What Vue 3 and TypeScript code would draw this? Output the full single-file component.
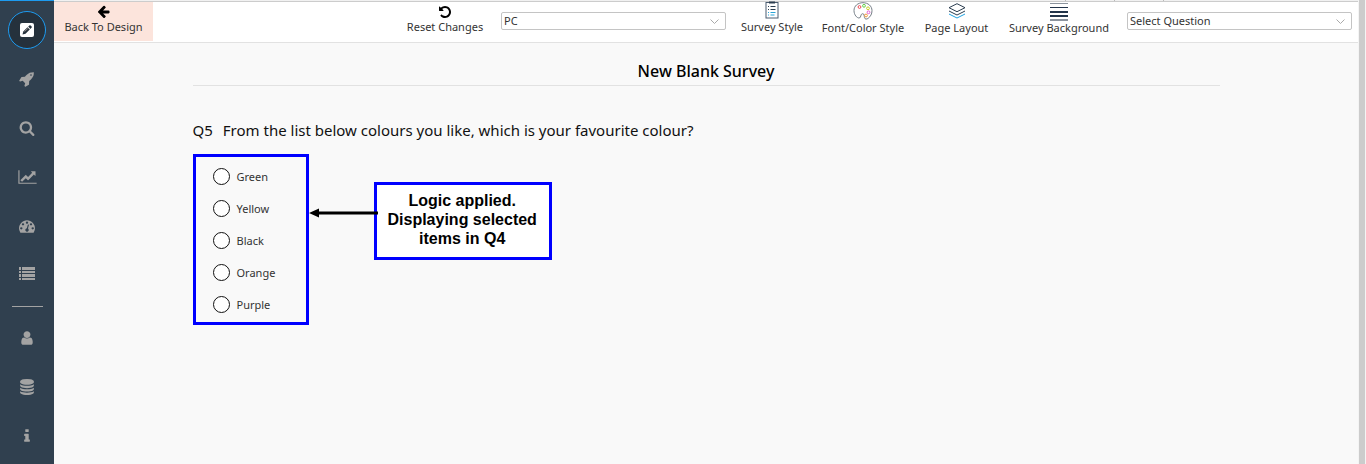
<script setup lang="ts">
import { ref } from 'vue'

interface NavItem {
  name: string
  box: string
  path: string
}

const dot = 'q0-53-37.5-90.5t-90.5-37.5-90.5 37.5-37.5 90.5 37.5 90.5 90.5 37.5 90.5-37.5 37.5-90.5z'
const disc = 'q237 0 443-43t325-127v170q0 69-103 128t-280 93.5-385 34.5-385-34.5-280-93.5-103-128v-170q119 84 325 127t443 43z'

const mainNav: NavItem[] = [
  {
    name: 'Launch',
    box: '0 0 1792 1792',
    path: 'M1440 448q0-40-28-68t-68-28-68 28-28 68 28 68 68 28 68-28 28-68zm224-288q0 249-75.5 430.5t-253.5 360.5q-81 80-195 176l-20 379q-2 16-16 26l-384 224q-7 4-16 4-12 0-23-9l-64-64q-13-14-8-32l85-276-281-281-276 85q-3 1-9 1-14 0-23-9l-64-64q-17-19-5-39l224-384q10-14 26-16l379-20q96-114 176-195 188-187 358-258t431-71q14 0 24 9.5t10 22.5z',
  },
  {
    name: 'Search',
    box: '0 0 1792 1792',
    path: 'M1216 832q0-185-131.5-316.5t-316.5-131.5-316.5 131.5-131.5 316.5 131.5 316.5 316.5 131.5 316.5-131.5 131.5-316.5zm512 832q0 52-38 90t-90 38q-54 0-90-38l-343-342q-179 124-399 124-143 0-273.5-55.5t-225-150-150-225-55.5-273.5 55.5-273.5 150-225 225-150 273.5-55.5 273.5 55.5 225 150 150 225 55.5 273.5q0 220-124 399l343 343q37 37 37 90z',
  },
  {
    name: 'Reports',
    box: '0 0 2048 1792',
    path: 'M2048 1536v128h-2048v-1536h128v1408h1920zm-128-1248v435q0 21-19.5 29.5t-35.5-7.5l-121-121-633 633q-10 10-23 10t-23-10l-233-233-416 416-192-192 585-585q10-10 23-10t23 10l233 233 464-464-121-121q-16-16-7.5-35.5t29.5-19.5h435q14 0 23 9t9 23z',
  },
  {
    name: 'Dashboard',
    box: '0 0 1792 1792',
    path: `M384 1152${dot}m192-448${dot}m428 481l101-382q6-26-7.5-48.5t-38.5-29.5-48 6.5-30 39.5l-101 382q-60 5-107 43.5t-63 98.5q-20 77 20 146t117 89 146-20 89-117q16-60-6-117t-72-91zm660-33${dot}m-640-640${dot}m448 192${dot}m320 448q0 261-141 483-19 29-54 29h-1402q-35 0-54-29-141-221-141-483 0-182 71-348t191-286 286-191 348-71 348 71 286 191 191 286 71 348z`,
  },
  {
    name: 'List',
    box: '0 0 16 16',
    path: 'M0 0h2v3H0zM3 0h13v3H3zM0 4h2v2H0zM3 4h13v2H3zM0 7h2v3H0zM3 7h13v3H3zM0 11h2v2H0zM3 11h13v2H3z',
  },
]

const accountNav: NavItem[] = [
  {
    name: 'Profile',
    box: '0 0 1792 1792',
    path: 'M1536 1399q0 109-62.5 187t-150.5 78h-854q-88 0-150.5-78t-62.5-187q0-85 8.5-160.5t31.5-152 58.5-131 94-89 134.5-34.5q131 128 313 128t313-128q76 0 134.5 34.5t94 89 58.5 131 31.5 152 8.5 160.5zm-256-887q0 159-112.5 271.5t-271.5 112.5-271.5-112.5-112.5-271.5 112.5-271.5 271.5-112.5 271.5 112.5 112.5 271.5z',
  },
  {
    name: 'Data',
    box: '0 0 1792 1792',
    path: `M896 768${disc}M896 1536${disc}M896 1152${disc}M896 0q208 0 385 34.5t280 93.5 103 128v128q0 69-103 128t-280 93.5-385 34.5-385-34.5-280-93.5-103-128v-128q0-69 103-128t280-93.5 385-34.5z`,
  },
  {
    name: 'Information',
    box: '0 0 1792 1792',
    path: 'M1216 1344v128q0 26-19 45t-45 19h-512q-26 0-45-19t-19-45v-128q0-26 19-45t45-19h64v-384h-64q-26 0-45-19t-19-45v-128q0-26 19-45t45-19h384q26 0 45 19t19 45v576h64q26 0 45 19t19 45zm-128-1152v192q0 26-19 45t-45 19h-256q-26 0-45-19t-19-45v-192q0-26 19-45t45-19h256q26 0 45 19t19 45z',
  },
]

const colours: string[] = ['Green', 'Yellow', 'Black', 'Orange', 'Purple']
const favourite = ref<string>('')
const device = ref<string>('PC')
const question = ref<string>('')
</script>

<template>
  <div class="app">
    <nav class="sidebar" aria-label="Main">
      <button class="edit" type="button" aria-label="Edit survey">
        <svg width="14" height="14" viewBox="0 0 14 14" aria-hidden="true">
          <rect width="14" height="14" rx="2" fill="#fff" />
          <path d="M2.500 11.500l.8-3 4.200-4.200 2.300 2.300-4.300 4.200z" fill="#25313c" />
          <path d="M8.200 3.600l1.200-1.200q.6-.5 1.200 0l1 1q.5.600 0 1.200l-1.200 1.300z" fill="#25313c" />
          <path d="M4.700 8.500l3.200-3.200" stroke="#b9a79c" stroke-width=".8" />
        </svg>
      </button>
      <button v-for="item in mainNav" :key="item.name" class="nav" type="button" :aria-label="item.name">
        <svg :class="{ wide: item.name === 'Reports' }" :viewBox="item.box" aria-hidden="true"><path :d="item.path" /></svg>
      </button>
      <hr class="divider" />
      <button v-for="item in accountNav" :key="item.name" class="nav" type="button" :aria-label="item.name">
        <svg :viewBox="item.box" aria-hidden="true"><path :d="item.path" /></svg>
      </button>
    </nav>

    <div class="page">
      <div class="strip" aria-hidden="true"><i></i><i></i><i class="last"></i></div>
      <header class="toolbar">
        <button class="tool back" type="button">
          <svg width="14" height="14" viewBox="64 80 1792 1792" aria-hidden="true">
            <path d="M1664 896v128q0 53-32.500 90.500t-84.500 37.500h-704l293 294q38 36 38 90t-38 90l-75 76q-37 37-90 37-52 0-91-37l-651-652q-37-37-37-90 0-52 37-91l651-650q38-38 91-38 52 0 90 38l75 74q38 38 38 91t-38 91l-293 293h704q52 0 84.500 37.500t32.500 90.500z" />
          </svg>
          <span>Back To Design</span>
        </button>
        <div class="tools">
          <button class="tool reset" type="button">
            <svg width="14" height="14" viewBox="0 0 1792 1792" aria-hidden="true">
              <path d="M1664 896q0 156-61 298t-164 245-245 164-298 61q-172 0-327-72.500t-264-204.500q-7-10-6.500-22.500t8.500-20.500l137-138q10-9 25-9 16 2 23 12 73 95 179 147t225 52q104 0 198.500-40.500t163.500-109.500 109.500-163.500 40.500-198.500-40.500-198.500-109.500-163.500-163.500-109.500-198.500-40.500q-98 0-188 35.500t-160 101.500l137 138q31 30 14 69-17 40-59 40h-448q-26 0-45-19t-19-45v-448q0-42 40-59 39-17 69 14l130 129q107-101 244.500-156.500t284.500-55.500q156 0 298 61t245 164 164 245 61 298z" />
            </svg>
            <span>Reset Changes</span>
          </button>
          <div class="picker">
            <select v-model="device" aria-label="Device">
              <option value="PC">PC</option>
            </select>
            <svg class="chevron" width="9" height="5" viewBox="0 0 9 5" aria-hidden="true"><path d="M.5.500l4 4 4-4" /></svg>
          </div>
          <button class="tool style" type="button">
            <svg width="14" height="18" viewBox="0 0 14 18" fill="none" aria-hidden="true">
              <rect x="1" y="1.500" width="12" height="15.500" stroke="#4a5c70" />
              <path d="M4 1.500h6" stroke="#2c3e50" stroke-width="2" />
              <path d="M3 5.500h1M5.500 5.500h5M3 8.500h1M5.500 8.500h5" stroke="#2c3e50" />
              <path d="M3 11.500h1M5.500 11.500h5M3 14h1M5.500 14h4" stroke="#2aa5d8" />
            </svg>
            <span>Survey Style</span>
          </button>
          <button class="tool palette" type="button">
            <svg width="20" height="18" viewBox="0 0 20 18" fill="none" aria-hidden="true">
              <path d="M10 .7C4.800.7 1 4 1 8.500S4 16 6 16c2.600 0 1-4 3.500-4.300 2-.2 1.500 2.300 2 4 .4 1.700 2.300 1.800 3.700.6C17.500 14.500 19 12 19 8.700 19 4 15 .7 10 .7z" fill="#fff" stroke="#777f88" />
              <circle cx="6.500" cy="5" r="1.400" stroke="#ef4b55" />
              <circle cx="11" cy="3.800" r="1.400" stroke="#65cf4a" />
              <circle cx="15" cy="6.300" r="1.400" stroke="#c9d12d" />
              <circle cx="15.500" cy="10.300" r="1.400" stroke="#e45bd4" />
              <circle cx="13" cy="13.500" r="1.400" stroke="#f39a3d" />
            </svg>
            <span>Font/Color Style</span>
          </button>
          <button class="tool layout" type="button">
            <svg width="18" height="16" viewBox="0 0 18 16" fill="none" aria-hidden="true">
              <path d="M9 .7l8 4-8 4-8-4z" stroke="#2c3e50" />
              <path d="M1 8l8 4 8-4" stroke="#2c3e50" />
              <path d="M1 11l8 4 8-4" stroke="#1da1e0" />
            </svg>
            <span>Page Layout</span>
          </button>
          <button class="tool background" type="button">
            <svg width="18" height="18" viewBox="0 0 18 18" aria-hidden="true">
              <path d="M0 0h18v1H0zM0 16h18v2H0z" fill="#8c949e" />
              <path d="M0 4h18v1H0zM0 8h18v2H0zM0 12h18v2H0z" fill="#22344a" />
            </svg>
            <span>Survey Background</span>
          </button>
          <div class="picker">
            <select v-model="question" aria-label="Question">
              <option value="">Select Question</option>
            </select>
            <svg class="chevron" width="9" height="5" viewBox="0 0 9 5" aria-hidden="true"><path d="M.5.500l4 4 4-4" /></svg>
          </div>
        </div>
      </header>

      <main class="survey">
        <h1>New Blank Survey</h1>
        <h2 id="question"><span>Q5</span><span>From the list below colours you like, which is your favourite colour?</span></h2>
        <div class="answer">
          <div class="options" role="radiogroup" aria-labelledby="question">
            <label v-for="colour in colours" :key="colour" class="option">
              <input v-model="favourite" type="radio" name="favourite" :value="colour" />
              <span>{{ colour }}</span>
            </label>
          </div>
          <svg class="arrow" width="69" height="10" viewBox="0 0 69 10" aria-hidden="true">
            <path d="M0 5l10-4.500v3h59v3H10v3z" />
          </svg>
          <p class="callout">Logic applied.<br />Displaying selected<br />items in Q4</p>
        </div>
      </main>
    </div>
    <div class="scroll"></div>
  </div>
</template>

<style>
body {
  margin: 0;
}
</style>

<style scoped>
.app {
  display: flex;
  min-height: 100vh;
  background: #f9f9f9;
  font-family: 'Noto Sans', 'Open Sans', sans-serif;
  color: #333;
}
button {
  border: 0;
  padding: 0;
  background: none;
  font: inherit;
  color: inherit;
  cursor: pointer;
}
.sidebar {
  flex: none;
  display: flex;
  flex-direction: column;
  align-items: center;
  width: 54px;
  box-sizing: border-box;
  border-top: 1px solid #1d9bf0;
  background: #30404f;
}
.edit {
  display: grid;
  place-items: center;
  width: 38px;
  height: 38px;
  margin: 10px 0 5px;
  box-sizing: border-box;
  border: 1px solid #1d9bf0;
  border-radius: 50%;
  background: #25313c;
}
.nav {
  display: grid;
  place-items: center;
  width: 100%;
  height: 49px;
}
.nav svg {
  width: 16px;
  height: 16px;
  fill: #a3a3a3;
}
.nav .wide {
  width: 19px;
}
.divider {
  width: 31px;
  height: 1px;
  margin: 7px 0 6px;
  border: 0;
  background: #a3a3a3;
}
.page {
  flex: 1;
  min-width: 0;
}
.strip {
  display: flex;
  justify-content: flex-end;
  height: 2px;
  box-sizing: border-box;
  border-bottom: 1px solid #ccc;
  background: #f1f1f1;
}
.strip i {
  width: 48px;
  border-left: 1px solid #bbb;
}
.strip .last {
  width: 194px;
}
.toolbar {
  display: flex;
  justify-content: space-between;
  height: 40px;
  box-sizing: border-box;
  border-bottom: 1px solid #fff;
  box-shadow: 0 1px #e2e2e2;
  background: #fff;
}
.tools {
  display: flex;
  gap: 14px;
  padding-right: 6px;
}
.tool {
  display: flex;
  flex-direction: column;
  align-items: center;
  justify-content: flex-end;
  padding-bottom: 6px;
  font-size: 11px;
  line-height: 15px;
  white-space: nowrap;
}
.tool svg {
  flex: none;
}
.back {
  width: 99px;
  padding-bottom: 7px;
  background: #fce4dc;
}
.reset {
  width: 84px;
  padding-bottom: 7px;
}
.style {
  width: 64px;
  padding-bottom: 7px;
}
.palette {
  width: 90px;
}
.layout {
  width: 69px;
}
.background {
  width: 108px;
}
.background svg {
  margin-bottom: -1px;
}
.layout svg {
  margin-bottom: 1px;
}
.picker {
  display: grid;
  align-items: center;
  width: 225px;
  height: 18px;
  margin-top: 10px;
}
.picker > * {
  grid-area: 1 / 1;
}
.picker select {
  appearance: none;
  width: 100%;
  height: 18px;
  padding: 0 20px 0 2px;
  border: 1px solid #c4c4c4;
  border-radius: 2px;
  background: #fff;
  color: #333;
  font: 11px/16px 'Noto Sans', sans-serif;
}
.chevron {
  justify-self: end;
  margin-right: 7px;
  fill: none;
  stroke: #aaa;
  pointer-events: none;
}
.survey {
  max-width: 1027px;
  margin: 0 auto;
  padding-top: 18px;
}
h1 {
  margin: 0;
  padding-bottom: 2px;
  border-bottom: 1px solid #e2e2e2;
  font-size: 16px;
  font-weight: 500;
  line-height: 23px;
  text-align: center;
  color: #000;
}
h2 {
  display: flex;
  gap: 10px;
  margin: 34px 0 14px;
  font-size: 15px;
  font-weight: 400;
  line-height: 20px;
  color: #111;
}
.answer {
  display: flex;
  align-items: flex-start;
}
.options {
  padding: 3px 17px 2px;
  width: 116px;
  box-sizing: border-box;
  border: 3px solid #00f;
}
.option {
  display: flex;
  align-items: center;
  gap: 7px;
  height: 32px;
  font-size: 11px;
}
.option input {
  appearance: none;
  flex: none;
  width: 17px;
  height: 17px;
  margin: 0;
  border: 1px solid #111;
  border-radius: 50%;
  background: #fff;
}
.option input:checked {
  box-shadow: inset 0 0 0 4px #fff;
  background: #111;
}
.arrow {
  position: relative;
  flex: none;
  margin: 54px -4px 0 0;
}
.callout {
  margin: 28px 0 0;
  padding: 6px 12px 9px 11px;
  border: 3px solid #00f;
  background: #fff;
  color: #000;
  font: bold 16px/19px 'Liberation Sans', sans-serif;
  text-align: center;
}
.scroll {
  flex: none;
  width: 6px;
  border: solid #f4f4f4;
  border-width: 0 1px;
  background: #ccc;
}
</style>
